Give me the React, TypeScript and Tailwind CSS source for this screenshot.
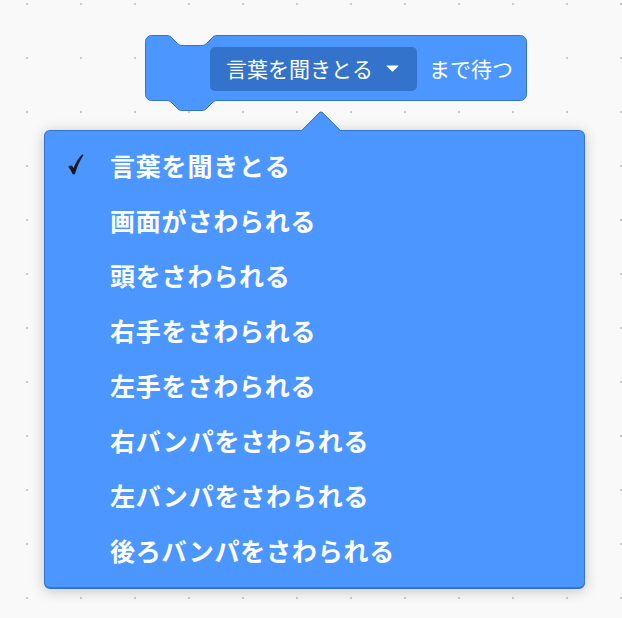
const items = [
  "言葉を聞きとる",
  "画面がさわられる",
  "頭をさわられる",
  "右手をさわられる",
  "左手をさわられる",
  "右バンパをさわられる",
  "左バンパをさわられる",
  "後ろバンパをさわられる",
]

function BlockShape() {
  return (
    <svg className="absolute left-0 top-0" width="384" height="78" viewBox="0 0 384 78">
      <path
        d="M 0.5,6.5 A 6,6 0 0 1 6.5,0.5 H 22 c 2.5,0 3.75,1.25 5,2.5 l 5,5 c 1.25,1.25 2.5,2.5 5,2.5 h 20 c 2.5,0 3.75,-1.25 5,-2.5 l 5,-5 c 1.25,-1.25 2.5,-2.5 5,-2.5 H 375.5 A 6,6 0 0 1 381.5,6.5 V 59.5 A 6,6 0 0 1 375.5,65.5 H 72 c -2.5,0 -3.75,1.25 -5,2.5 l -5,5 c -1.25,1.25 -2.5,2.5 -5,2.5 h -20 c -2.5,0 -3.75,-1.25 -5,-2.5 l -5,-5 c -1.25,-1.25 -2.5,-2.5 -5,-2.5 H 6.5 A 6,6 0 0 1 0.5,59.5 Z"
        fill="#4C97FF"
        stroke="#3373CC"
        strokeWidth="1"
      />
    </svg>
  )
}

function Check() {
  return (
    <svg width="16" height="21" viewBox="-0.5 -0.5 16 21">
      <path
        d="M0.6,12.4 C1.6,11.2 2.8,11.3 3.7,12.6 L5.2,15.2 C7.2,9.4 9.8,4.6 14.2,0.6 C11,5.2 8.4,10.6 6,18.8 C5.7,19.6 4.7,19.6 4.4,18.8 C3.4,16.2 2.1,14.2 0.6,12.4 Z"
        fill="#15171c"
        stroke="#15171c"
        strokeWidth="1.3"
        strokeLinejoin="round"
      />
    </svg>
  )
}

export default function App() {
  return (
    <div className="w-[622px] h-[618px] overflow-hidden bg-[#f9f9f9] bg-[radial-gradient(circle,#cdcdcd_1px,transparent_1.6px)] [background-size:54px_54px] [background-position:0px_-23px] font-['Noto_Sans_CJK_JP',sans-serif]">
      <div className="flex flex-col">
        {/* block */}
        <div className="relative ml-[145px] mt-[35px] w-[383px] h-[66px]">
          <BlockShape />
          <div className="relative flex items-center h-full pl-[65px] pt-[1px] gap-[12px] text-white">
            <div className="flex items-center h-[44px] pl-[16px] pr-[18px] gap-[13px] rounded-[5px] bg-[#3373CC]">
              <span className="text-[21px] leading-none">言葉を聞きとる</span>
              <svg width="13" height="7" viewBox="0 0 13 7">
                <path d="M1 0.5 H12 Q12.8 0.5 12.2 1.3 L7.2 6.2 Q6.5 6.9 5.8 6.2 L0.8 1.3 Q0.2 0.5 1 0.5 Z" fill="#fff" />
              </svg>
            </div>
            <span className="text-[21px] leading-none">まで待つ</span>
          </div>
        </div>

        {/* dropdown */}
        <div className="relative ml-[44px] mt-[29px] w-[541px] h-[459px] rounded-[6px] bg-[#4C97FF] border border-[#3373CC] border-b-2 shadow-[0_2px_14px_rgba(0,0,0,0.22)]">
          <div className="absolute left-[262px] top-[-15px] w-[28px] h-[28px] rotate-45 rounded-tl-[4px] bg-[#4C97FF] border-t border-l border-[#3373CC]" />
          <div className="relative flex flex-col pt-[7px] pl-[23px]">
            {items.map((item, i) => (
              <div key={item} className="flex items-center h-[55px]">
                <span className="flex w-[42px] pb-[2px]">{i === 0 ? <Check /> : null}</span>
                <span className="text-[25px] font-bold leading-none text-white tracking-[0.8px]">{item}</span>
              </div>
            ))}
          </div>
        </div>
      </div>
    </div>
  )
}
